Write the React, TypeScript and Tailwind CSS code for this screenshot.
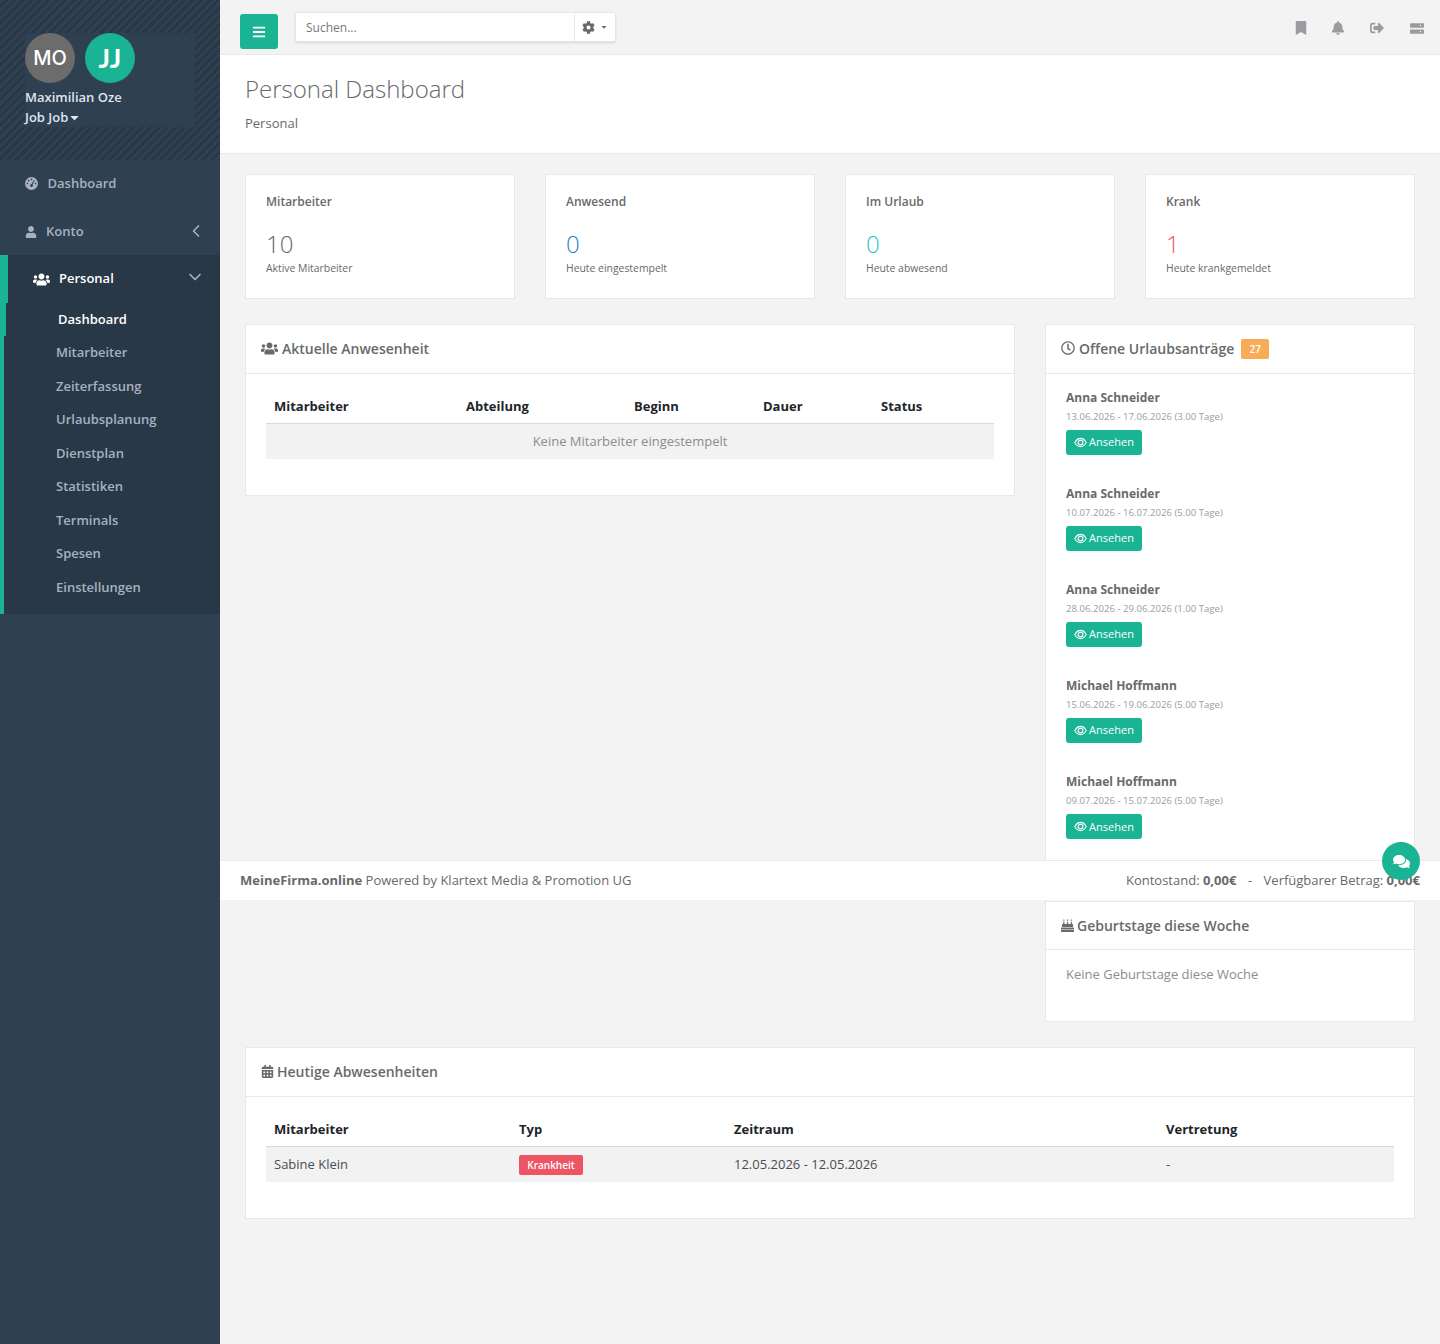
import { ChevronDown, ChevronLeft } from 'lucide-react'
import {
  FaBars,
  FaBell,
  FaBookmark,
  FaCalendarAlt,
  FaCaretDown,
  FaCog,
  FaComments,
  FaRegClock,
  FaSignOutAlt,
  FaUser,
  FaUsers,
} from 'react-icons/fa'

const subNav = ['Mitarbeiter', 'Zeiterfassung', 'Urlaubsplanung', 'Dienstplan', 'Statistiken', 'Terminals', 'Spesen', 'Einstellungen']

const stats = [
  { title: 'Mitarbeiter', value: '10', note: 'Aktive Mitarbeiter', color: 'text-[#676a6c]' },
  { title: 'Anwesend', value: '0', note: 'Heute eingestempelt', color: 'text-[#1c84c6]' },
  { title: 'Im Urlaub', value: '0', note: 'Heute abwesend', color: 'text-[#23c6c8]' },
  { title: 'Krank', value: '1', note: 'Heute krankgemeldet', color: 'text-[#ed5565]' },
]

const requests = [
  { name: 'Anna Schneider', range: '13.06.2026 - 17.06.2026 (3.00 Tage)' },
  { name: 'Anna Schneider', range: '10.07.2026 - 16.07.2026 (5.00 Tage)' },
  { name: 'Anna Schneider', range: '28.06.2026 - 29.06.2026 (1.00 Tage)' },
  { name: 'Michael Hoffmann', range: '15.06.2026 - 19.06.2026 (5.00 Tage)' },
  { name: 'Michael Hoffmann', range: '09.07.2026 - 15.07.2026 (5.00 Tage)' },
]

function ServerIcon() {
  return (
    <svg viewBox="0 0 16 12" className="w-[14px] h-[11px] fill-[#999c9e]">
      <path d="M1 0h14a1 1 0 0 1 1 1v3a1 1 0 0 1-1 1H1a1 1 0 0 1-1-1V1a1 1 0 0 1 1-1Zm11 1.7a.8.8 0 1 0 0 1.6.8.8 0 0 0 0-1.6Z" fillRule="evenodd" />
      <path d="M1 7h14a1 1 0 0 1 1 1v3a1 1 0 0 1-1 1H1a1 1 0 0 1-1-1V8a1 1 0 0 1 1-1Zm11 1.7a.8.8 0 1 0 0 1.6.8.8 0 0 0 0-1.6Z" fillRule="evenodd" />
    </svg>
  )
}

function GaugeIcon() {
  return (
    <svg viewBox="0 0 14 14" className="w-[13px] h-[13px] shrink-0">
      <circle cx="7" cy="7" r="7" fill="currentColor" />
      <g fill="#2f4050">
        <circle cx="7" cy="2.6" r="0.9" />
        <circle cx="3.9" cy="3.9" r="0.9" />
        <circle cx="2.6" cy="7" r="0.9" />
        <circle cx="11.4" cy="7" r="0.9" />
        <circle cx="7" cy="9.2" r="1.5" />
      </g>
      <path d="M7 9 10 3.8" stroke="#2f4050" strokeWidth="1.1" />
    </svg>
  )
}

function EyeIcon() {
  return (
    <svg viewBox="0 0 14 12" className="w-[13px] h-[11px] shrink-0" fill="none" stroke="currentColor">
      <path d="M.8 6C2.4 3 4.5 1.5 7 1.5S11.6 3 13.2 6C11.6 9 9.5 10.5 7 10.5S2.4 9 .8 6Z" strokeWidth="1.1" />
      <circle cx="7" cy="6" r="2.6" strokeWidth="1.3" />
    </svg>
  )
}

function CakeIcon() {
  return (
    <svg viewBox="0 0 14 14" className="w-[13px] h-[13px] shrink-0 mr-[-1px]" fill="currentColor">
      <rect x="2.4" y="0.6" width="1.3" height="1.3" />
      <rect x="6.4" y="0.6" width="1.3" height="1.3" />
      <rect x="10.4" y="0.6" width="1.3" height="1.3" />
      <rect x="2.4" y="3" width="1.3" height="2.5" />
      <rect x="6.4" y="3" width="1.3" height="2.5" />
      <rect x="10.4" y="3" width="1.3" height="2.5" />
      <rect x="1" y="5.5" width="12" height="3" rx="0.6" />
      <rect x="0" y="9.2" width="14" height="1.6" />
      <rect x="0" y="11.4" width="14" height="2.6" rx="0.4" />
    </svg>
  )
}

function Sidebar() {
  return (
    <aside className="w-[220px] shrink-0 bg-[#2f4050] text-[13px]">
      <div className="h-[160px] pt-[33px] px-[25px] bg-[repeating-linear-gradient(135deg,#2f4050_0px,#2f4050_3px,#293846_3px,#293846_6px)]">
        <div className="w-[170px] h-[94px] bg-[#2f4050]">
          <div className="flex gap-[10px]">
            <div className="w-[50px] h-[50px] rounded-full bg-[#6c6c6c] text-white font-['Inter',sans-serif] text-[20px] font-medium flex items-center justify-center">MO</div>
            <div className="w-[50px] h-[50px] rounded-full bg-[#1ab394] text-white font-['Lato',sans-serif] text-[27px] font-bold flex items-center justify-center">JJ</div>
          </div>
          <div className="mt-[4px] h-[20px] leading-[20px] font-semibold text-[#dfe4ed]">Maximilian Oze</div>
          <div className="h-[20px] leading-[20px] font-semibold text-[#dfe4ed] flex items-center">
            Job Job
            <FaCaretDown className="text-[13px]" />
          </div>
        </div>
      </div>

      <div className="h-[47px] pl-[25px] flex items-center gap-[9.5px] font-semibold text-[#a7b1c2]">
        <GaugeIcon />
        Dashboard
      </div>
      <div className="h-[48px] pl-[25px] pr-[14px] pt-[1px] flex items-center gap-[9px] font-semibold text-[#a7b1c2]">
        <FaUser className="text-[12px]" />
        <span className="flex-1">Konto</span>
        <ChevronLeft size={20} strokeWidth={2} className="-mt-[1px]" />
      </div>

      <div className="border-l-4 border-[#1ab394] bg-[#293846] h-[359px]">
        <div className="h-[48px] border-l-4 border-[#1ab394] pl-[25px] pr-[15px] flex items-center gap-[9px] font-semibold text-white">
          <FaUsers className="text-[17px]" />
          <span className="flex-1">Personal</span>
          <ChevronDown size={20} strokeWidth={2} className="-mt-[5px] text-[#a7b1c2]" />
        </div>
        <div className="h-[33.2px] border-l-2 border-[#1ab394] pl-[52px] flex items-center font-semibold text-white">Dashboard</div>
        {subNav.map((item) => (
          <div key={item} className="h-[33.5px] pl-[52px] flex items-center font-semibold text-[#a7b1c2]">
            {item}
          </div>
        ))}
      </div>
    </aside>
  )
}

function Topbar() {
  return (
    <div className="h-[55px] border-b border-[#e7eaec] pl-[20px] pr-[16px] flex items-start">
      <button className="mt-[14px] w-[38px] h-[35px] rounded-[3px] bg-[#1ab394] text-white flex items-center justify-center">
        <FaBars className="text-[14px]" />
      </button>
      <div className="mt-[12px] ml-[17px] w-[321px] h-[30px] flex bg-white rounded-[2px] border border-[#e5e6e7] shadow-[0_1px_2px_rgba(0,0,0,0.12)]">
        <input placeholder="Suchen..." className="flex-1 min-w-0 px-[10px] pt-[2px] text-[12px] outline-none placeholder:text-[#757a80]" />
        <div className="w-[41px] border-l border-[#e5e6e7] flex items-center justify-center gap-[5px] text-[#676a6c]">
          <FaCog className="text-[13px]" />
          <FaCaretDown className="text-[8px]" />
        </div>
      </div>
      <div className="ml-auto mt-[21px] flex items-center text-[#999c9e]">
        <FaBookmark className="text-[14px]" />
        <FaBell className="text-[14px] ml-[23.5px]" />
        <FaSignOutAlt className="text-[14px] ml-[25px]" />
        <div className="ml-[26px]">
          <ServerIcon />
        </div>
      </div>
    </div>
  )
}

function Card({
  title,
  icon,
  children,
  className,
  headClass = 'h-[49px] pb-[2px]',
}: {
  title: React.ReactNode
  icon: React.ReactNode
  children: React.ReactNode
  className?: string
  headClass?: string
}) {
  return (
    <div className={`bg-white border border-[#e7eaec] ${className ?? ''}`}>
      <div className={`${headClass} border-b border-[#e7eaec] pl-[15px] flex items-center gap-[4px] text-[14px] font-semibold text-[#676a6c]`}>
        {icon}
        {title}
      </div>
      {children}
    </div>
  )
}

function Requests() {
  return (
    <Card
      className="h-[552px]"
      icon={<FaRegClock className="text-[14px]" />}
      title={
        <>
          Offene Urlaubsanträge
          <span className="ml-[3px] translate-y-px w-[28px] h-[20px] rounded-[2px] bg-[#f8ac59] text-white text-[10px] font-semibold flex items-center justify-center">27</span>
        </>
      }
    >
      <div className="px-[20px] pt-[15px]">
        {requests.map((r, i) => (
          <div key={i} className="h-[96.1px]">
            <div className="h-[18px] leading-[18px] text-[12px] font-bold text-[#676a6c]">{r.name}</div>
            <div className="mt-[2px] h-[16px] leading-[16px] text-[9.6px] text-[#9b9da0]">{r.range}</div>
            <button className="mt-[4.9px] w-[76px] h-[25px] rounded-[3px] bg-[#1ab394] text-white text-[11px] flex items-center justify-center gap-[2px]">
              <EyeIcon />
              Ansehen
            </button>
          </div>
        ))}
      </div>
    </Card>
  )
}

function App() {
  return (
    <div className="relative flex min-h-screen bg-[#f3f3f4] font-['Open_Sans',sans-serif] text-[13px] text-[#676a6c]">
      <Sidebar />
      <main className="flex-1 min-w-0">
        <Topbar />
        <div className="h-[99px] bg-white border-b border-[#e7eaec] pl-[25px] pt-[16px]">
          <h1 className="text-[24px] leading-[35px] font-light">Personal Dashboard</h1>
          <div className="mt-[7px] text-[13px] leading-[20px]">Personal</div>
        </div>

        <div className="px-[25px] pt-[20px]">
          <div className="grid grid-cols-4 gap-[30px]">
            {stats.map((s) => (
              <div key={s.title} className="h-[125px] bg-white border border-[#e7eaec] pl-[20px] pt-[17px]">
                <div className="text-[12px] leading-[20px] font-semibold">{s.title}</div>
                <div className={`mt-[16px] text-[24px] leading-[32px] font-light ${s.color}`}>{s.value}</div>
                <div className="text-[10.4px] leading-[16px]">{s.note}</div>
              </div>
            ))}
          </div>

          <div className="mt-[25px] flex gap-[30px] items-start">
            <div className="w-[770px]">
              <Card icon={<FaUsers className="text-[17px]" />} title="Aktuelle Anwesenheit" className="h-[172px]">
                <div className="px-[20px] pt-[15px]">
                  <table className="w-[728px] table-fixed border-collapse">
                    <thead>
                      <tr className="h-[34px] text-left font-bold text-[#212529] border-b border-[#d8dadc]">
                        <th className="w-[192px] pl-[8px] pt-[1px]">Mitarbeiter</th>
                        <th className="w-[168px] pl-[8px] pt-[1px]">Abteilung</th>
                        <th className="w-[129px] pl-[8px] pt-[1px]">Beginn</th>
                        <th className="w-[118px] pl-[8px] pt-[1px]">Dauer</th>
                        <th className="w-[121px] pl-[8px] pt-[1px]">Status</th>
                      </tr>
                    </thead>
                    <tbody>
                      <tr className="h-[36px] bg-[#f2f2f2]">
                        <td colSpan={5} className="pt-[1px] text-center text-[#8b8d90]">Keine Mitarbeiter eingestempelt</td>
                      </tr>
                    </tbody>
                  </table>
                </div>
              </Card>
            </div>

            <div className="w-[370px]">
              <Requests />
              <Card className="mt-[25px] h-[121px]" headClass="h-[48px]" icon={<CakeIcon />} title="Geburtstage diese Woche">
                <div className="pl-[20px] pt-[14px] text-[#8b8d90] leading-[20px]">Keine Geburtstage diese Woche</div>
              </Card>
            </div>
          </div>

          <Card className="mt-[25px] h-[172px]" icon={<FaCalendarAlt className="text-[13px] -mr-px" />} title="Heutige Abwesenheiten">
            <div className="px-[20px] pt-[15px]">
              <table className="w-[1128px] table-fixed border-collapse">
                <thead>
                  <tr className="h-[34px] text-left font-bold text-[#212529] border-b border-[#d8dadc]">
                    <th className="w-[245px] pl-[8px] pt-[1px]">Mitarbeiter</th>
                    <th className="w-[215px] pl-[8px] pt-[1px]">Typ</th>
                    <th className="w-[432px] pl-[8px] pt-[1px]">Zeitraum</th>
                    <th className="w-[236px] pl-[8px] pt-[1px]">Vertretung</th>
                  </tr>
                </thead>
                <tbody>
                  <tr className="h-[36px] bg-[#f2f2f2] text-[#4a4d50]">
                    <td className="pl-[8px] pt-[1px]">Sabine Klein</td>
                    <td className="pl-[8px] pt-[1px]">
                      <span className="inline-flex items-center justify-center w-[64px] h-[20px] rounded-[2px] bg-[#ed5565] text-white text-[10px] font-semibold">Krankheit</span>
                    </td>
                    <td className="pl-[8px] pt-[1px]">12.05.2026 - 12.05.2026</td>
                    <td className="pl-[8px] pt-[1px]">-</td>
                  </tr>
                </tbody>
              </table>
            </div>
          </Card>
        </div>
      </main>

      {/* footer and chat bubble sit over the content */}
      <div className="absolute left-[220px] right-0 top-[860px] h-[40px] bg-white border-t border-[#e7eaec] px-[20px] flex items-center justify-between">
        <div>
          <b>MeineFirma.online</b> Powered by Klartext Media &amp; Promotion UG
        </div>
        <div>
          Kontostand: <b>0,00€</b>
          <span className="mx-[11.5px]">-</span>
          Verfügbarer Betrag: <b>0,00€</b>
        </div>
      </div>
      <div className="absolute left-[1382px] top-[842px] w-[38px] h-[38px] rounded-full bg-[#1ab394] text-white flex items-center justify-center">
        <FaComments className="text-[17px]" />
      </div>
    </div>
  )
}

export default App
